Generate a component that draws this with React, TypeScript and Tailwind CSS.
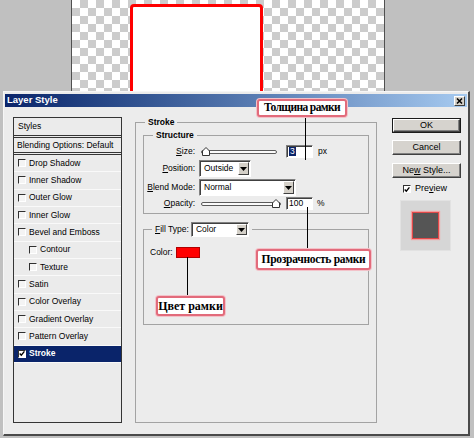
import React from "react";

const UI_FONT = "font-['Liberation_Sans',Arial,sans-serif] text-[8.5px] text-black";

type ListItem = { label: string; indent?: boolean; active?: boolean };

const ITEMS: ListItem[] = [
  { label: "Drop Shadow" },
  { label: "Inner Shadow" },
  { label: "Outer Glow" },
  { label: "Inner Glow" },
  { label: "Bevel and Emboss" },
  { label: "Contour", indent: true },
  { label: "Texture", indent: true },
  { label: "Satin" },
  { label: "Color Overlay" },
  { label: "Gradient Overlay" },
  { label: "Pattern Overlay" },
  { label: "Stroke", active: true },
];

function CheckMark() {
  return (
    <svg width="7" height="7" viewBox="0 0 7 7">
      <path d="M0.8 3.4 L2.7 5.4 L6.3 1" fill="none" stroke="#000" strokeWidth="1.6" />
    </svg>
  );
}

function Checkbox({ checked, white }: { checked?: boolean; white?: boolean }) {
  return (
    <span
      className={`inline-flex h-[8px] w-[8px] shrink-0 items-center justify-center border-t-[1.5px] border-l-[1.5px] border-t-[#303030] border-l-[#303030] border-b border-r border-b-white border-r-white ${
        white ? "bg-white" : "bg-[#f4f4f4]"
      }`}
    >
      {checked && <CheckMark />}
    </span>
  );
}

function Slider({ width, thumbAt }: { width: number; thumbAt: "left" | "right" }) {
  return (
    <div className="relative h-[13px] shrink-0" style={{ width }}>
      <div className="absolute left-0 right-0 top-[5px] h-[4px] rounded-full border border-[#5a5a5a] bg-[#fafafa]" />
      <svg
        className={`absolute top-[2px] ${thumbAt === "left" ? "left-[1px]" : "right-[1px]"}`}
        width="8"
        height="9"
        viewBox="0 0 8 9"
      >
        <polygon points="0.5,8.5 0.5,4 4,0.5 7.5,4 7.5,8.5" fill="#fff" stroke="#333" />
      </svg>
    </div>
  );
}

function TextBox({ children }: { children: React.ReactNode }) {
  return (
    <div className="flex h-[13px] w-[27px] shrink-0 items-center border-t border-l border-t-[#808080] border-l-[#808080] border-b border-r border-b-white border-r-white bg-white pl-[2px] shadow-[inset_1px_1px_0_#404040]">
      {children}
    </div>
  );
}

function Select({ value, width, height = 17 }: { value: string; width: number; height?: number }) {
  return (
    <div
      className="flex shrink-0 items-stretch border-t border-l border-t-[#808080] border-l-[#808080] border-b border-r border-b-white border-r-white bg-white p-[1px] shadow-[inset_1px_1px_0_#404040]"
      style={{ width, height }}
    >
      <span className="flex flex-1 items-center pl-[3px]">{value}</span>
      <span className="flex w-[11px] items-center justify-center border border-t-white border-l-white border-b-[#404040] border-r-[#404040] bg-[#d4d0c8]">
        <svg width="7" height="4" viewBox="0 0 7 4">
          <polygon points="0,0 7,0 3.5,4" fill="#000" />
        </svg>
      </span>
    </div>
  );
}

function Button({ children, isDefault }: { children: React.ReactNode; isDefault?: boolean }) {
  return (
    <div className={`h-[15px] w-[69px] ${isDefault ? "border border-[#1a1a1a]" : ""}`}>
      <div className="flex h-full w-full items-center justify-center border border-t-white border-l-white border-b-[#404040] border-r-[#404040] bg-[#d6d3ce] text-[9px] shadow-[inset_-1px_-1px_0_#808080]">
        {children}
      </div>
    </div>
  );
}

function Annotation({ text, className }: { text: string; className: string }) {
  return (
    <div
      className={`absolute flex items-center justify-center whitespace-nowrap rounded-[3px] border-2 border-[#e26b7b] bg-white font-['Liberation_Serif','Times_New_Roman',serif] font-bold text-black shadow-[0_0_0_1px_#f3c2c9] ${className}`}
    >
      {text}
    </div>
  );
}

export default function App() {
  return (
    <div className={`relative h-[438px] w-[474px] overflow-hidden bg-[#c0c0c0] ${UI_FONT}`}>
      {/* canvas behind the dialog */}
      <div className="flex h-[91px]">
        <div className="w-[71px]" />
        <div className="h-full w-[314px] overflow-hidden border-x border-[#505050] bg-[image:repeating-conic-gradient(#cccccc_0_25%,#ffffff_0_50%)] bg-[length:16px_16px]">
          <div className="ml-[58px] mt-[4px] h-[120px] w-[133px] rounded-[4px] border-[3px] border-[#ff0000] bg-white" />
        </div>
      </div>

      {/* dialog */}
      <div className="ml-[3px] h-[345px] w-[467px] border-t border-l border-t-[#f6f6f6] border-l-[#f6f6f6] border-r-2 border-b-2 border-r-[#4a4a4a] border-b-[#4a4a4a] bg-[#ececec]">
        <div className="mx-[1px] mt-[2px] flex h-[13px] items-center justify-between bg-linear-to-r from-[#0a246a] to-[#a6caf0] pl-[2px] pr-[2px]">
          <span className="text-[9.5px] font-bold text-white">Layer Style</span>
          <span className="flex h-[10px] w-[11px] items-center justify-center border border-t-white border-l-white border-b-[#404040] border-r-[#404040] bg-[#d4d0c8]">
            <svg width="7" height="6" viewBox="0 0 7 6">
              <path d="M1 0.5 L6 5.5 M6 0.5 L1 5.5" stroke="#000" strokeWidth="1.5" />
            </svg>
          </span>
        </div>

        <div className="flex pl-[9px] pt-[10px]">
          {/* styles list */}
          <div className="h-[306px] w-[109px] border border-[#353535] bg-[#ebebeb]">
            <div className="flex h-[20px] items-center border-b-[3px] border-double border-b-[#353535] pl-[4px]">
              Styles
            </div>
            <div className="flex h-[17px] items-center border-b-[3px] border-double border-b-[#353535] pl-[3px]">
              Blending Options: Default
            </div>
            {ITEMS.map((item) => (
              <div
                key={item.label}
                className={`flex h-[17.33px] items-center gap-[3px] border-b border-b-[#f9f9f9] ${
                  item.indent ? "pl-[15px]" : "pl-[4px]"
                } ${item.active ? "bg-[#0a246a] font-bold text-white" : ""}`}
              >
                <Checkbox checked={item.active} white={item.active} />
                <span>{item.label}</span>
              </div>
            ))}
          </div>

          {/* stroke settings */}
          <fieldset className="ml-[13px] h-[306px] w-[242px] border border-[#a3a3a3] px-[7px]">
            <legend className="ml-[2px] px-[3px] text-[8.5px] font-bold leading-[10px]">Stroke</legend>

            <fieldset className="mt-[3px] border border-[#a3a3a3] pb-[3px]">
              <legend className="ml-[9px] px-[3px] font-bold leading-[10px]">Structure</legend>
              <div className="pt-[5px]">
                <div className="flex h-[13px] items-center">
                  <span className="w-[51px] text-right">
                    <u>S</u>ize:
                  </span>
                  <div className="ml-[6px]">
                    <Slider width={76} thumbAt="left" />
                  </div>
                  <div className="ml-[9px]">
                    <TextBox>
                      <span className="bg-[#0a246a] px-[1px] leading-[9px] text-white">3</span>
                    </TextBox>
                  </div>
                  <span className="ml-[5px]">px</span>
                </div>
                <div className="mt-[2px] flex h-[17px] items-center">
                  <span className="w-[51px] text-right">
                    <u>P</u>osition:
                  </span>
                  <div className="ml-[4px]">
                    <Select value="Outside" width={52} />
                  </div>
                </div>
                <div className="mt-[2px] flex h-[17px] items-center">
                  <span className="w-[51px] text-right">
                    <u>B</u>lend Mode:
                  </span>
                  <div className="ml-[4px]">
                    <Select value="Normal" width={97} />
                  </div>
                </div>
                <div className="mt-[1px] flex h-[13px] items-center">
                  <span className="w-[51px] text-right">
                    <u>O</u>pacity:
                  </span>
                  <div className="ml-[6px]">
                    <Slider width={80} thumbAt="right" />
                  </div>
                  <div className="ml-[5px]">
                    <TextBox>100</TextBox>
                  </div>
                  <span className="ml-[4px]">%</span>
                </div>
              </div>
            </fieldset>

            <fieldset className="mt-[8px] h-[103px] border border-[#a3a3a3]">
              <legend className="ml-[8px] flex items-center px-[3px]">
                <span>
                  <u>F</u>ill Type:
                </span>
                <div className="ml-[2px]">
                  <Select value="Color" width={58} height={15} />
                </div>
              </legend>
              <div className="mt-[10px] flex h-[11px] items-center pl-[6px]">
                <span>Color:</span>
                <span className="ml-[3px] h-[11px] w-[24px] border border-[#b00000] bg-[#ff0000]" />
              </div>
            </fieldset>
          </fieldset>

          {/* buttons */}
          <div className="ml-[15px] flex w-[69px] flex-col pt-[1px]">
            <Button isDefault>OK</Button>
            <div className="mt-[7px]">
              <Button>Cancel</Button>
            </div>
            <div className="mt-[8px]">
              <Button>
                Ne<u>w</u>&nbsp;Style...
              </Button>
            </div>
            <div className="mt-[6px] flex h-[10px] items-center pl-[11px]">
              <Checkbox checked white />
              <span className="ml-[4px] text-[9px]">
                Pre<u>v</u>iew
              </span>
            </div>
            <div className="ml-[8px] mt-[6px] flex h-[51px] w-[51px] items-center justify-center border border-[#e2e2e2] bg-[#d6d6d6]">
              <div className="h-[27px] w-[27px] border-[1.5px] border-[#e04848] bg-[#555555] shadow-[0_0_1px_1px_#f2a0a0]" />
            </div>
          </div>
        </div>
      </div>

      {/* callouts */}
      <div className="absolute left-[305px] top-[116px] h-[44px] w-px bg-black" />
      <div className="absolute left-[307px] top-[207px] h-[42px] w-px bg-black" />
      <div className="absolute left-[187px] top-[257px] h-[39px] w-px bg-black" />
      <Annotation
        text="Толщина рамки"
        className="left-[257px] top-[99px] h-[18px] w-[90px] text-[11.5px] tracking-[-0.6px]"
      />
      <Annotation
        text="Прозрачность рамки"
        className="left-[256px] top-[249px] h-[21px] w-[115px] text-[11.5px] tracking-[-0.3px]"
      />
      <Annotation text="Цвет рамки" className="left-[156px] top-[296px] h-[20px] w-[69px] text-[12px]" />
    </div>
  );
}
